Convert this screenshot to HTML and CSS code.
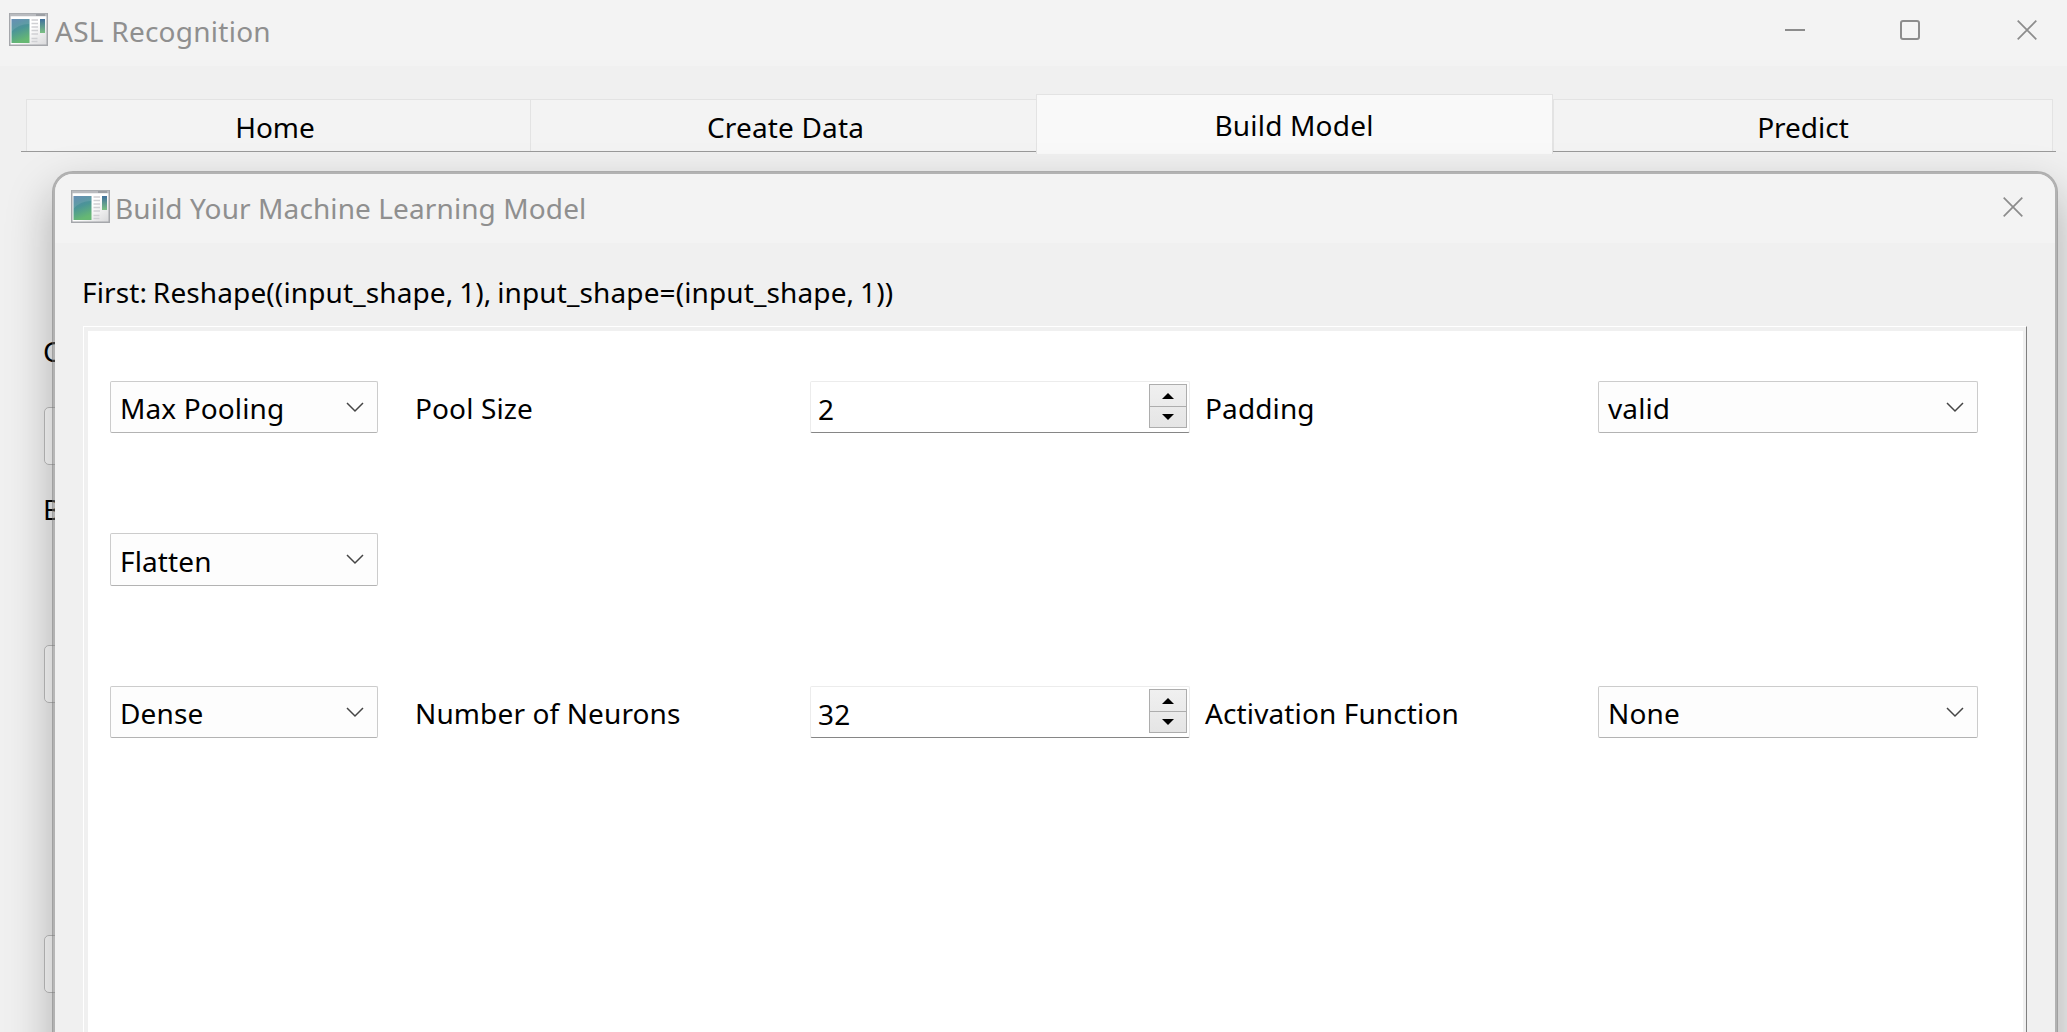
FILE: index.html
```
<!DOCTYPE html>
<html lang="en">
<head>
<meta charset="utf-8">
<title>ASL Recognition</title>
<link rel="stylesheet" href="styles.css">
</head>
<body>
<svg width="0" height="0" class="defs" aria-hidden="true">
  <defs>
    <linearGradient id="pane" x1="0" y1="0" x2="0.3" y2="1"><stop offset="0" stop-color="#5581ad"/><stop offset="0.5" stop-color="#4b9597"/><stop offset="1" stop-color="#66b873"/></linearGradient>
    <linearGradient id="side" x1="0" y1="0" x2="0" y2="1"><stop offset="0" stop-color="#3f6f9c"/><stop offset="1" stop-color="#7cc083"/></linearGradient>
    <linearGradient id="sheet" x1="0" y1="0" x2="1" y2="1"><stop offset="0.5" stop-color="#fff"/><stop offset="1" stop-color="#d8d8da"/></linearGradient>
    <symbol id="app" viewBox="0 0 39 33">
      <rect x="0.75" y="0.75" width="37.5" height="31.5" fill="url(#sheet)" stroke="#a5a7ab" stroke-width="1.5"/>
      <path d="M1 2h37" stroke="#b9bbbf" stroke-width="2.5"/><path d="M27 2h9" stroke="#94979c" stroke-width="1.5"/>
      <rect x="2.5" y="6" width="18" height="24" fill="url(#pane)"/>
      <path d="M2.5 19Q9 11 20.500 11V6h-18z" fill="#fff" opacity=".1"/>
      <path d="M22.500 7h6.500M22.500 10.500h6.500M22.500 14h6.500M22.500 17.500h6.500M22.500 21h6.500M22.500 25.500h6M22.500 28.500h6" stroke="#cfd0d3" stroke-width="1.300"/>
      <rect x="31" y="6" width="5" height="14" fill="url(#side)"/>
    </symbol>
    <symbol id="close" viewBox="0 0 20 20"><path d="M.7.7l18.600 18.600M19.300.7L.7 19.300" stroke="#8c8c8c" stroke-width="1.700"/></symbol>
    <symbol id="chev" viewBox="0 0 18 11"><path d="M1 1l8 8 8-8" fill="none" stroke="#454545" stroke-width="1.500"/></symbol>
  </defs>
</svg>
<div class="window">
  <header class="titlebar">
    <svg class="app-icon"><use href="#app"/></svg>
    <span class="title t-asl">ASL Recognition</span>
    <div class="controls">
      <svg width="20" height="20"><path d="M0 10h20" stroke="#8c8c8c" stroke-width="2"/></svg>
      <svg width="20" height="20"><rect x="1" y="1" width="18" height="18" rx="2" fill="none" stroke="#8c8c8c" stroke-width="2"/></svg>
      <svg width="20" height="20"><use href="#close"/></svg>
    </div>
  </header>
  <nav class="tabs">
    <div class="tab"><span class="t-home">Home</span></div>
    <div class="tab"><span class="t-create">Create Data</span></div>
    <div class="tab active"><span class="t-build">Build Model</span></div>
    <div class="tab"><span class="t-predict">Predict</span></div>
  </nav>
  <main class="page">
    <div class="page-label">C</div>
    <div class="page-button first"></div>
    <div class="page-label second">B</div>
    <div class="page-button middle"></div>
    <div class="page-button last"></div>
  </main>
</div>
<section class="dialog">
  <header class="dialog-bar">
    <svg class="app-icon"><use href="#app"/></svg>
    <span class="title t-dialog">Build Your Machine Learning Model</span>
    <svg class="dialog-close"><use href="#close"/></svg>
  </header>
  <p class="intro"><span class="t-first">First: Reshape((input_shape, 1), input_shape=(input_shape, 1))</span></p>
  <div class="frame">
    <div class="layers">
      <div class="layer">
        <div class="combo"><span>Max Pooling</span><svg><use href="#chev"/></svg></div>
        <label>Pool Size</label>
        <div class="spin"><span>2</span><div class="steps"><i class="up"></i><i class="down"></i></div></div>
        <label>Padding</label>
        <div class="combo"><span>valid</span><svg><use href="#chev"/></svg></div>
      </div>
      <div class="layer tall">
        <div class="combo"><span>Flatten</span><svg><use href="#chev"/></svg></div>
      </div>
      <div class="layer">
        <div class="combo"><span>Dense</span><svg><use href="#chev"/></svg></div>
        <label>Number of Neurons</label>
        <div class="spin"><span>32</span><div class="steps"><i class="up"></i><i class="down"></i></div></div>
        <label>Activation Function</label>
        <div class="combo"><span>None</span><svg><use href="#chev"/></svg></div>
      </div>
    </div>
  </div>
</section>
</body>
</html>
```
FILE: styles.css
```
* { box-sizing: border-box; }
html, body { height: 100%; overflow: hidden; }
body { margin: 0; position: relative; background: #f0f0f0; color: #000; font: 28px/38px "Noto Sans", sans-serif; }
span { white-space: nowrap; }
svg { flex: none; }
.defs { position: absolute; }

.window { height: 1032px; display: flex; flex-direction: column; }
.titlebar { height: 66px; flex: none; display: flex; align-items: flex-start; padding: 13px 30px 0 9px; background: #f3f3f3; }
.app-icon { width: 39px; height: 33px; }
.title { color: #8f8f8f; }
.t-asl { letter-spacing: .25px; }
.t-home { margin-right: 7px; }
.t-create { letter-spacing: .15px; margin-left: 4px; }
.t-build { letter-spacing: .2px; margin-right: 1px; }
.t-dialog { letter-spacing: .1px; }
.t-first { word-spacing: -1.6px; letter-spacing: .12px; }
.titlebar .title { margin: -1px 0 0 7px; }
.controls { margin: 7px 0 0 auto; display: flex; }
.controls svg + svg { margin-left: 95px; }
.controls svg + svg + svg { margin-left: 97px; }

.tabs { flex: none; height: 88px; padding: 28px 11px 0 21px; display: grid; grid-template-columns: 509px 506px 517px 503px; align-items: start; background: linear-gradient(#9a9a9a, #9a9a9a) 21px 85px / 2035px 1px no-repeat; }
.tab { height: 52px; margin-top: 5px; border: 1px solid #e3e3e3; border-width: 1px 0 0 1px; background: #f3f3f3; text-align: center; padding-top: 8px; }
.tab:first-child { margin-left: 5px; }
.tab:last-child { border-right-width: 1px; margin-right: 3px; }
.tab.active { height: 60px; margin-top: 0; padding-top: 11px; border-right-width: 1px; background: #f9f9f9; }

.page { padding: 178px 0 0 44px; }
.page-label { margin-left: -1px; }
.page-button { width: 1960px; height: 58px; border: 1px solid #bdbdbd; border-radius: 5px; background: #fbfbfb; }
.page-button.first { margin-top: 37px; }
.page-label.second { margin-top: 25px; }
.page-button.middle { margin-top: 117px; }
.page-button.last { margin-top: 232px; }

.dialog { position: absolute; left: 52px; top: 171px; width: 2006px; height: 900px; border: 3px solid rgba(116, 116, 116, .5); border-radius: 21px 21px 0 0; background: #f0f0f0; background-clip: padding-box; box-shadow: 0 20px 46px rgba(0, 0, 0, .27); display: flex; flex-direction: column; }
.dialog-bar { flex: none; height: 69px; padding: 16px 32px 0 16px; display: flex; align-items: flex-start; background: #f3f3f3; border-radius: 18px 18px 0 0; }
.dialog-bar .title { margin: -1px 0 0 5px; }
.dialog-close { width: 20px; height: 20px; margin: 7px 0 0 auto; }
.intro { margin: 30px 0 15px 27px; height: 38px; }
.frame { flex: 1; margin: 0 28px 0 28px; border: 1px solid #fff; border-right-color: #808080; padding: 4px 3px 0 4px; }
.layers { height: 100%; background: #fff; padding: 50px 45px 0 22px; }
.layer { height: 152px; letter-spacing: .12px; display: grid; grid-template-columns: 268px 432px 380px 408px 380px; align-items: start; }
.layer.tall { height: 153px; }
.layer.tall .combo { height: 53px; }
.layer.tall .combo span { margin-top: 2px; }
.combo { height: 52px; display: flex; align-items: center; border: 1px solid #ccc; border-bottom-color: #b3b3b3; border-radius: 2px; background: #fdfdfd; padding: 0 13px 0 9px; }
.combo span { margin-top: 1px; }
.combo svg { width: 18px; height: 11px; margin-left: auto; }
.layer label { padding: 8px 0 0 37px; }
.layer .spin + label { padding-left: 15px; }
.spin { height: 52px; display: flex; border: 1px solid #ececec; border-bottom-color: #868686; border-radius: 2px; padding: 2px 2px 0 7px; }
.spin > span { margin-top: 6px; }
.steps { width: 38px; height: 44px; margin-left: auto; border: 1px solid #adadad; background: linear-gradient(#f0f0f0, #e5e5e5); display: grid; grid-template-rows: 22px 20px; }
.steps i { display: flex; align-items: center; justify-content: center; }
.steps .up { border-bottom: 1px solid #adadad; }
.steps i::before { content: ""; border: 6px solid transparent; border-top-width: 0; border-bottom: 6px solid #000; }
.steps .down::before { border-bottom-width: 0; border-top: 6px solid #000; }
```
